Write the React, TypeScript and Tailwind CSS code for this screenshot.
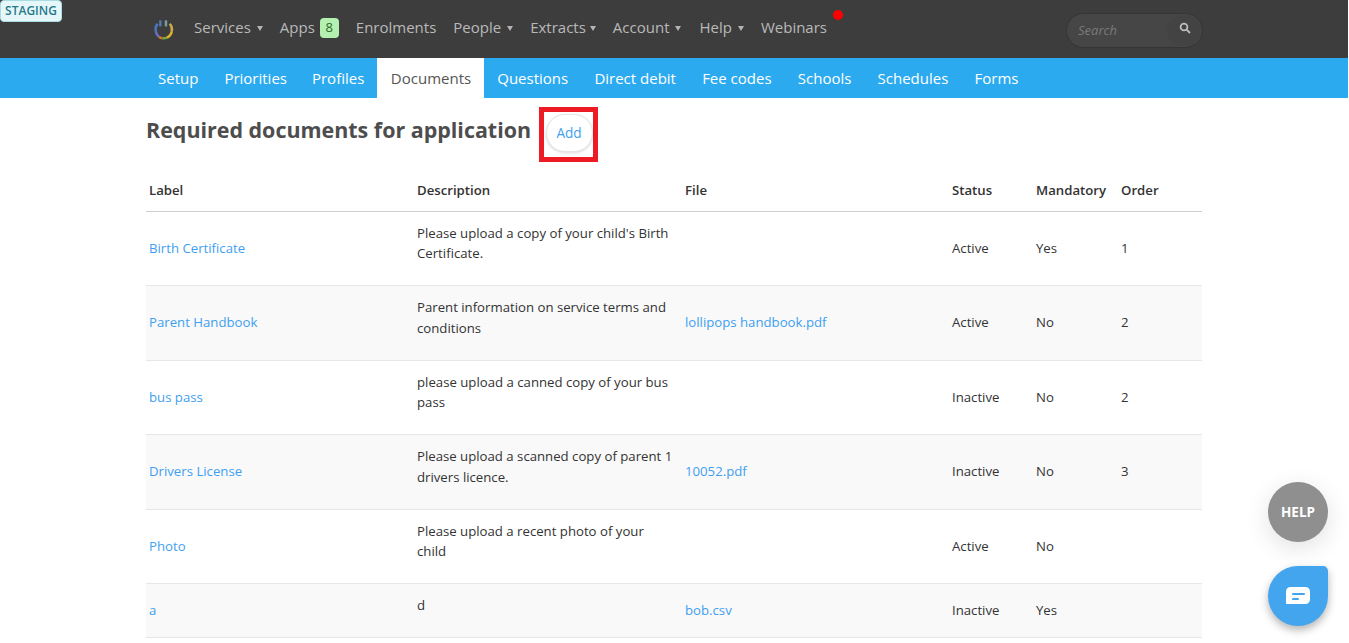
import React from "react";

function Caret({ className = "ml-[6px]" }: { className?: string }) {
  return <span className={`${className} inline-block h-0 w-0 translate-y-[1px] border-x-[3.5px] border-t-[5px] border-x-transparent border-t-[#b4b4b4]`} />;
}

function Logo() {
  return (
    <svg width="21" height="21" viewBox="0 0 24 24" fill="none" strokeWidth="2.8" className="ml-[-1px]">
      <path d="M5.2 5.5 A10 10 0 0 0 3.2 14" stroke="#4a78c8" />
      <path d="M3.2 14 A10 10 0 0 0 7 20.6" stroke="#6a6fc0" />
      <path d="M7 20.6 A10 10 0 0 0 11 22" stroke="#d8742c" />
      <path d="M11 22 A10 10 0 0 0 16 21.3" stroke="#6fae3c" />
      <path d="M16 21.3 A10 10 0 0 0 21.5 14" stroke="#e0b52a" />
      <path d="M21.5 14 A10 10 0 0 0 19.2 5.5" stroke="#c9a94a" />
      <path d="M8.4 1.5 V8.5" stroke="#5577aa" strokeWidth="2.8" />
      <path d="M14.8 1.5 V8.5" stroke="#7f9aa0" strokeWidth="2.8" />
    </svg>
  );
}

const rows = [
  { l: "Birth Certificate", d: "Please upload a copy of your child's Birth Certificate.", f: "", s: "Active", m: "Yes", o: "1" },
  { l: "Parent Handbook", d: "Parent information on service terms and conditions", f: "lollipops handbook.pdf", s: "Active", m: "No", o: "2" },
  { l: "bus pass", d: "please upload a canned copy of your bus pass", f: "", s: "Inactive", m: "No", o: "2" },
  { l: "Drivers License", d: "Please upload a scanned copy of parent 1 drivers licence.", f: "10052.pdf", s: "Inactive", m: "No", o: "3" },
  { l: "Photo", d: "Please upload a recent photo of your child", f: "", s: "Active", m: "No", o: "" },
  { l: "a", d: "d", f: "bob.csv", s: "Inactive", m: "Yes", o: "" },
];

export default function App() {
  return (
    <div className="relative h-[643px] w-[1349px] overflow-hidden bg-white font-['Open_Sans','Noto_Sans',sans-serif] text-[13.2px] leading-[20.8px] text-[#333]">
      <div className="absolute left-0 top-0 h-[22px] w-[62px] rounded-[4px] border border-[#a9dde3] bg-[#e6f7f9] text-center text-[12px] font-semibold leading-[20px] text-[#27798c]">
        STAGING
      </div>

      <header className="flex h-[58px] w-[1348px] items-center bg-[#3d3d3d] pb-[3px] pl-[152px] text-[15px] text-[#b9b9b9]">
        <div className="mt-[3px] flex h-[24px] w-[24px] items-center justify-center"><Logo /></div>
        <span className="ml-[18px]">Services</span><Caret />
        <span className="ml-[17px]">Apps</span>
        <span className="ml-[5px] flex h-[20px] w-[19px] items-center justify-center rounded-[4px] bg-[#b4f0b0] text-[13px] text-[#2c6a2c]">8</span>
        <span className="ml-[17px]">Enrolments</span>
        <span className="ml-[17px]">People</span><Caret />
        <span className="ml-[17px]">Extracts</span><Caret className="ml-[4px]" />
        <span className="ml-[17px]">Account</span><Caret />
        <span className="ml-[18px]">Help</span><Caret />
        <span className="ml-[17px]">Webinars</span>
        <span className="mb-[26px] ml-[6px] h-[10px] w-[10px] rounded-full bg-[#ff0000]" />
        <div className="ml-auto mr-[145px] mt-[5px] flex h-[35px] w-[137px] items-center justify-between rounded-full border border-[#353535] bg-[#464646] pl-[11px] pr-[1px]">
          <span className="pt-[1px] text-[13px] italic text-[#7a7a7a]">Search</span>
          <span className="flex h-[31px] w-[34px] items-center justify-center rounded-full bg-[#434343]">
            <svg width="12" height="12" viewBox="0 0 12 12" fill="none" stroke="#bdbdbd" strokeWidth="1.8" className="mb-[4px] ml-[1px]">
              <circle cx="5" cy="5" r="3.4" />
              <path d="M7.6 7.6 L11 11" />
            </svg>
          </span>
        </div>
      </header>

      <nav className="flex h-[40px] w-[1348px] items-center bg-[#2caaf0] pl-[145px] text-[15px] text-white">
        <span className="px-[13px]">Setup</span>
        <span className="px-[13px]">Priorities</span>
        <span className="pl-[12px] pr-[13px]">Profiles</span>
        <span className="flex h-full items-center bg-white pl-[13.5px] pr-[13px] text-[#555]">Documents</span>
        {["Questions", "Direct debit", "Fee codes", "Schools", "Schedules", "Forms"].map((t) => (
          <span key={t} className="px-[13.1px]">{t}</span>
        ))}
      </nav>

      <main className="ml-[146px] w-[1056px]">
        <div className="flex h-[64px] items-start pt-[9px]">
          <h1 className="mt-[6px] text-[21.45px] font-bold leading-[33px] text-[#4d4d4d]">Required documents for application</h1>
          <div className="ml-[7.5px] h-[55px] w-[59px] border-[5px] border-[#ed1c24] pl-[2px] pt-[2px]">
            <button className="block h-[38px] w-[47px] rounded-[19px] border border-[#e6e6e6] bg-white text-center text-[13.6px] text-[#3f9ff0] shadow-[0_1px_3px_rgba(0,0,0,0.15)]">
              Add
            </button>
          </div>
        </div>

        <table className="w-[1056px] table-fixed border-collapse text-left">
          <colgroup>
            <col className="w-[267px]" />
            <col className="w-[268px]" />
            <col className="w-[267px]" />
            <col className="w-[84px]" />
            <col className="w-[85px]" />
            <col className="w-[85px]" />
          </colgroup>
          <thead>
            <tr className="h-[49.2px] border-b border-[#d0d0d0]">
              {["Label", "Description", "File", "Status", "Mandatory", "Order"].map((h, i) => (
                <th key={h} className={`${i === 0 ? "pl-[3px]" : "pl-[4px]"} pr-[4px] pt-[8px] align-middle font-semibold text-[#333]`}>{h}</th>
              ))}
            </tr>
          </thead>
          <tbody>
            {rows.map((r, i) => (
              <tr key={r.l} className={`border-b border-[#e6e6e6] ${i % 2 === 1 ? "bg-[#f9f9f9]" : "bg-white"}`}>
                <td className="py-[10.95px] pl-[3px] pr-[4px] align-middle text-[#3f9ff0]">{r.l}</td>
                <td className="px-[4px] py-[10.95px] align-middle"><p className="mb-[10px] max-w-[258px]">{r.d}</p></td>
                <td className="px-[4px] py-[10.95px] align-middle text-[#3f9ff0]">{r.f}</td>
                <td className="px-[4px] py-[10.95px] align-middle">{r.s}</td>
                <td className="px-[4px] py-[10.95px] align-middle">{r.m}</td>
                <td className="px-[4px] py-[10.95px] align-middle">{r.o}</td>
              </tr>
            ))}
          </tbody>
        </table>
      </main>

      <div className="absolute left-[1268px] top-[482px] flex h-[60px] w-[60px] items-center justify-center rounded-full bg-[#8f8f8f] text-[13.5px] font-bold text-white shadow-[0_6px_24px_rgba(0,0,0,0.12)]">
        HELP
      </div>
      <div className="absolute left-[1268px] top-[566px] flex h-[60px] w-[60px] items-center justify-center rounded-[30px] rounded-tr-[5px] bg-[#42a5ee] shadow-[0_4px_8px_rgba(0,0,0,0.3)]">
        <svg width="24" height="18" viewBox="0 0 24 18">
          <path d="M5 0 H19 Q24 0 24 5 V12 Q24 17 19 17 H1 Q0 17 0 16 V5 Q0 0 5 0 Z" fill="#fff" />
          <rect x="6" y="6" width="13" height="2" rx="1" fill="#42a5ee" />
          <rect x="6" y="11" width="7" height="2" rx="1" fill="#42a5ee" />
        </svg>
      </div>
    </div>
  );
}
